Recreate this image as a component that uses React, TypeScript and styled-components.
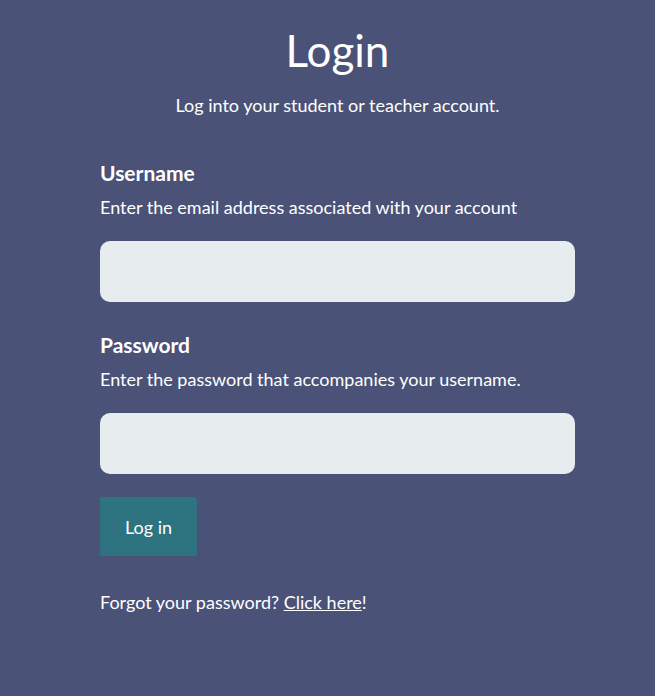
import React from "react";
import styled, { createGlobalStyle } from "styled-components";

const Global = createGlobalStyle`
  html, body { margin: 0; padding: 0; background: #4a5278; }
  body { font-family: Lato, "Open Sans", sans-serif; color: #ffffff; }
`;

const Page = styled.main`
  min-height: 696px;
  background: #4a5278;
  padding: 22px 0 0 100px;
  box-sizing: border-box;
`;

const Container = styled.div`
  width: 475px;
  display: flex;
  flex-direction: column;
`;

const Title = styled.h1`
  margin: 0;
  text-align: center;
  font-size: 44px;
  font-weight: 400;
  line-height: 56px;
`;

const Subtitle = styled.p`
  margin: 15px 0 0;
  text-align: center;
  font-size: 18px;
  line-height: 24px;
`;

const Field = styled.div<{ $top: number }>`
  display: flex;
  flex-direction: column;
  margin-top: ${(p) => p.$top}px;
`;

const Label = styled.label`
  font-size: 21px;
  font-weight: 700;
  line-height: 28px;
`;

const Hint = styled.span`
  margin-top: 8px;
  font-size: 18px;
  line-height: 24px;
`;

const Input = styled.input`
  margin-top: 22px;
  height: 61px;
  border: none;
  border-radius: 10px;
  background: #e7ecef;
  box-sizing: border-box;
  padding: 0 16px;
  font-size: 18px;
  font-family: inherit;
  outline: none;
`;

const Button = styled.button`
  margin-top: 23px;
  align-self: flex-start;
  width: 97px;
  height: 59px;
  border: none;
  border-radius: 3px;
  background: #2e7480;
  color: #ffffff;
  font-family: inherit;
  font-size: 18px;
  cursor: pointer;
`;

const Forgot = styled.p`
  margin: 34px 0 0;
  font-size: 18px;
  line-height: 24px;
`;

const Link = styled.a`
  color: #ffffff;
  text-decoration: underline;
`;

export default function App() {
  return (
    <>
      <Global />
      <Page>
        <Container>
          <Title>Login</Title>
          <Subtitle>Log into your student or teacher account.</Subtitle>
          <Field $top={42}>
            <Label>Username</Label>
            <Hint>Enter the email address associated with your account</Hint>
            <Input type="text" />
          </Field>
          <Field $top={29}>
            <Label>Password</Label>
            <Hint>Enter the password that accompanies your username.</Hint>
            <Input type="password" />
          </Field>
          <Button>Log in</Button>
          <Forgot>
            Forgot your password? <Link href="#">Click here</Link>!
          </Forgot>
        </Container>
      </Page>
    </>
  );
}
